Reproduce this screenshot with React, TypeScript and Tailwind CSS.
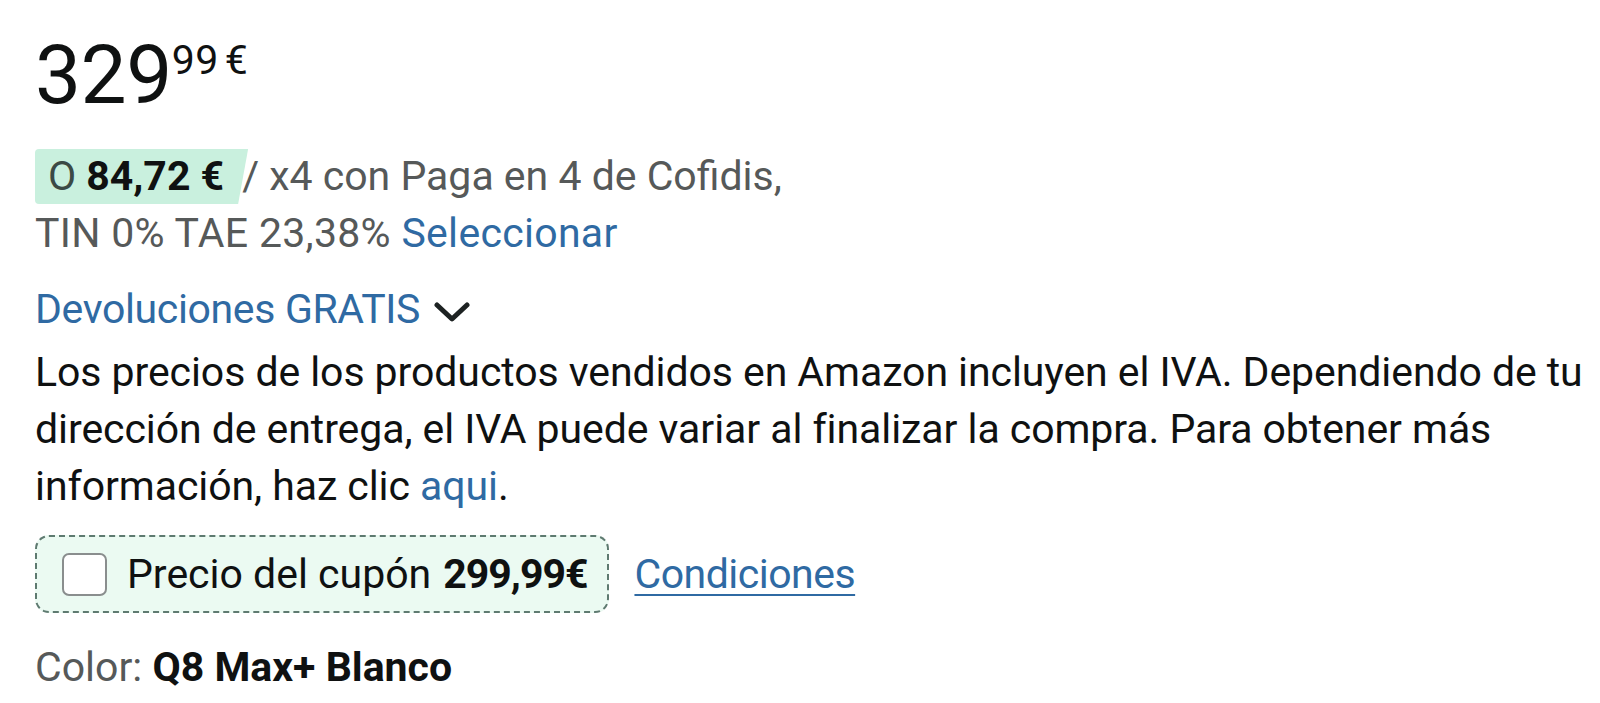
import React from "react";

export default function App() {
  return (
    <div className="w-[1600px] h-[703px] overflow-hidden bg-white font-['Roboto',_'Liberation_Sans',_sans-serif] text-[#0f1111]">
      <div className="pl-[35px] pt-[34px]">
        {/* Price */}
        <div className="flex items-start h-[86px]">
          <span className="text-[82px] leading-[82px] tracking-[-0.5px]">329</span>
          <span className="text-[41px] leading-[41px] mt-[6px] ml-[0px] tracking-[0.5px]">99</span>
          <span className="text-[41px] leading-[41px] mt-[6px] ml-[6px]">€</span>
        </div>

        {/* Installments */}
        <div className="mt-[28px] text-[41px] leading-[57px] text-[#565959]">
          <div className="flex items-center">
            <span className="inline-flex items-center h-[55px] pl-[13px] pr-[24px] bg-[#c9f0de] [clip-path:polygon(0_0,100%_0,calc(100%-10px)_100%,0_100%)] rounded-l-[4px]">
              <span className="text-[#3b4a45]">O</span>
              <span className="ml-[10px] font-bold text-[#0f1111]">84,72 €</span>
            </span>
            <span className="ml-[-6px]">/ x4 con Paga en 4 de Cofidis,</span>
          </div>
          <div className="tracking-[0.3px]">
            TIN 0% TAE 23,38% <span className="text-[#2f6aa3]">Seleccionar</span>
          </div>
        </div>

        {/* Returns */}
        <div className="mt-[19px] flex items-center text-[41px] leading-[57px] text-[#2f6aa3]">
          <span className="tracking-[-0.35px]">Devoluciones GRATIS</span>
          <svg className="ml-[14px] mt-[4px]" width="36" height="22" viewBox="0 0 36 22" fill="none">
            <path d="M3 4 L18 18 L33 4" stroke="#1d2222" strokeWidth="5" strokeLinecap="round" strokeLinejoin="round" />
          </svg>
        </div>

        {/* VAT paragraph */}
        <p className="mt-[6px] text-[41px] leading-[57px] tracking-[-0.07px]">
          Los precios de los productos vendidos en Amazon incluyen el IVA. Dependiendo de tu
          <br />
          dirección de entrega, el IVA puede variar al finalizar la compra. Para obtener más
          <br />
          información, haz clic <span className="text-[#2f6aa3]">aqui</span>.
        </p>

        {/* Coupon */}
        <div className="mt-[20px] flex items-center">
          <div className="flex items-center h-[78px] pl-[25px] pr-[20px] rounded-[14px] border-2 border-dashed border-[#5e7a70] bg-[#ebfaf2]">
            <span className="w-[45px] h-[43px] rounded-[7px] border-2 border-[#8a8e8e] bg-white shrink-0" />
            <span className="ml-[20px] text-[41px] leading-[57px]">Precio del cupón</span>
            <span className="ml-[12px] text-[41px] leading-[57px] font-bold tracking-[-1px]">299,99€</span>
          </div>
          <span className="ml-[25px] text-[41px] leading-[57px] text-[#2f6aa3] tracking-[-0.5px] underline underline-offset-[6px] decoration-2">Condiciones</span>
        </div>

        {/* Color */}
        <div className="mt-[26px] text-[41px] leading-[57px]">
          <span className="text-[#565959]">Color: </span>
          <span className="font-bold">Q8 Max+ Blanco</span>
        </div>
      </div>
    </div>
  );
}
